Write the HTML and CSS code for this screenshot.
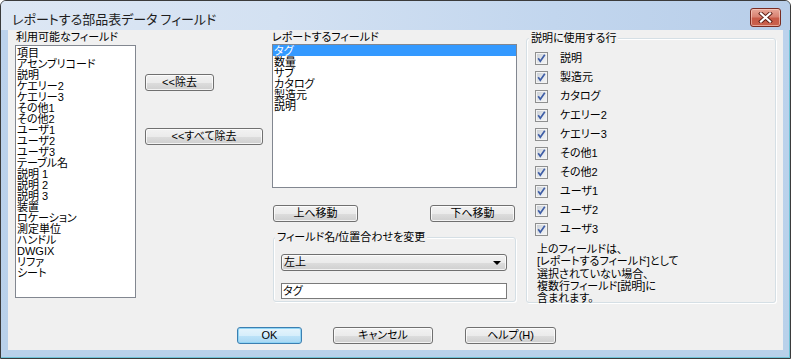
FILE: index.html
```html
<!DOCTYPE html>
<html lang="ja">
<head>
<meta charset="utf-8">
<title>レポートする部品表データ フィールド</title>
<link rel="stylesheet" href="styles.css">
</head>
<body>
<div class="window">
  <div class="titlebar">
    <div class="title">レポートする部品表データ フィールド</div>
    <div class="close">
      <svg width="15" height="11" viewBox="0 0 15 11">
        <path d="M3 1.5 L12 9.5 M12 1.5 L3 9.5" stroke="#5a1d14" stroke-width="4" stroke-linecap="square"/>
        <path d="M3 1.5 L12 9.5 M12 1.5 L3 9.5" stroke="#ffffff" stroke-width="2.2" stroke-linecap="square"/>
      </svg>
    </div>
  </div>
  <div class="client">
    <div class="top">
      <div class="col col-avail">
        <div class="label label-avail">利用可能なフィールド</div>
        <ul class="listbox list-avail">
          <li>項目</li>
          <li>アセンブリコード</li>
          <li>説明</li>
          <li>ケエリー2</li>
          <li>ケエリー3</li>
          <li>その他1</li>
          <li>その他2</li>
          <li>ユーザ1</li>
          <li>ユーザ2</li>
          <li>ユーザ3</li>
          <li>テーブル名</li>
          <li>説明 1</li>
          <li>説明 2</li>
          <li>説明 3</li>
          <li>装置</li>
          <li>ロケーション</li>
          <li>測定単位</li>
          <li>ハンドル</li>
          <li>DWGIX</li>
          <li>リファ</li>
          <li>シート</li>
        </ul>
      </div>
      <div class="col col-btns">
        <button class="btn btn-remove">&lt;&lt;除去</button>
        <button class="btn btn-remove-all">&lt;&lt;すべて除去</button>
      </div>
      <div class="col col-report">
        <div class="label label-report">レポートするフィールド</div>
        <ul class="listbox list-report">
          <li class="selected">タグ</li>
          <li>数量</li>
          <li>サブ</li>
          <li>カタログ</li>
          <li>製造元</li>
          <li>説明</li>
        </ul>
        <div class="move-row">
          <button class="btn btn-move">上へ移動</button>
          <button class="btn btn-move">下へ移動</button>
        </div>
        <div class="group change-group">
          <div class="legend">フィールド名/位置合わせを変更</div>
          <div class="combo"><span class="combo-text">左上</span><span class="arrow"></span></div>
          <div class="textbox">タグ</div>
        </div>
      </div>
      <div class="group desc-group">
        <div class="legend">説明に使用する行</div>
        <ul class="checks">
          <li><span class="cb"><svg width="11" height="11" viewBox="0 0 11 11"><path d="M2.2 5.2 L4.3 8.2 L8.8 1.8" fill="none" stroke="#3f5ea6" stroke-width="1.7"/></svg></span>説明</li>
          <li><span class="cb"><svg width="11" height="11" viewBox="0 0 11 11"><path d="M2.2 5.2 L4.3 8.2 L8.8 1.8" fill="none" stroke="#3f5ea6" stroke-width="1.7"/></svg></span>製造元</li>
          <li><span class="cb"><svg width="11" height="11" viewBox="0 0 11 11"><path d="M2.2 5.2 L4.3 8.2 L8.8 1.8" fill="none" stroke="#3f5ea6" stroke-width="1.7"/></svg></span>カタログ</li>
          <li><span class="cb"><svg width="11" height="11" viewBox="0 0 11 11"><path d="M2.2 5.2 L4.3 8.2 L8.8 1.8" fill="none" stroke="#3f5ea6" stroke-width="1.7"/></svg></span>ケエリー2</li>
          <li><span class="cb"><svg width="11" height="11" viewBox="0 0 11 11"><path d="M2.2 5.2 L4.3 8.2 L8.8 1.8" fill="none" stroke="#3f5ea6" stroke-width="1.7"/></svg></span>ケエリー3</li>
          <li><span class="cb"><svg width="11" height="11" viewBox="0 0 11 11"><path d="M2.2 5.2 L4.3 8.2 L8.8 1.8" fill="none" stroke="#3f5ea6" stroke-width="1.7"/></svg></span>その他1</li>
          <li><span class="cb"><svg width="11" height="11" viewBox="0 0 11 11"><path d="M2.2 5.2 L4.3 8.2 L8.8 1.8" fill="none" stroke="#3f5ea6" stroke-width="1.7"/></svg></span>その他2</li>
          <li><span class="cb"><svg width="11" height="11" viewBox="0 0 11 11"><path d="M2.2 5.2 L4.3 8.2 L8.8 1.8" fill="none" stroke="#3f5ea6" stroke-width="1.7"/></svg></span>ユーザ1</li>
          <li><span class="cb"><svg width="11" height="11" viewBox="0 0 11 11"><path d="M2.2 5.2 L4.3 8.2 L8.8 1.8" fill="none" stroke="#3f5ea6" stroke-width="1.7"/></svg></span>ユーザ2</li>
          <li><span class="cb"><svg width="11" height="11" viewBox="0 0 11 11"><path d="M2.2 5.2 L4.3 8.2 L8.8 1.8" fill="none" stroke="#3f5ea6" stroke-width="1.7"/></svg></span>ユーザ3</li>
        </ul>
        <p class="note">上のフィールドは、<br>[レポートするフィールド]として<br>選択されていない場合、<br>複数行フィールド[説明]に<br>含まれます。</p>
      </div>
    </div>
    <div class="bottom">
      <button class="btn btn-ok">OK</button>
      <button class="btn btn-cancel">キャンセル</button>
      <button class="btn btn-help">ヘルプ(H)</button>
    </div>
  </div>
</div>
</body>
</html>
```

FILE: styles.css
```css
* { box-sizing: border-box; }

html, body {
  margin: 0;
  padding: 0;
  background: #ffffff;
}

body {
  font-family: "Liberation Sans", "Noto Sans CJK JP", sans-serif;
  font-size: 11px;
  font-feature-settings: "palt";
  color: #000;
}

.window {
  width: 791px;
  height: 359px;
  border: 1px solid #3b3b3b;
  border-radius: 6px 6px 0 0;
  background: linear-gradient(to bottom, #c8daef 0px, #bcd2ec 30px, #b9d1ea 100%);
  box-shadow: inset -1px -1px 0 #6fc3d6;
  display: flex;
  flex-direction: column;
  overflow: hidden;
}

.titlebar {
  height: 29px;
  display: flex;
  justify-content: space-between;
  align-items: flex-start;
  background: linear-gradient(to right, #dde7f4 0%, #d3e1f2 35%, #c2d6ee 70%, #b8cee9 100%);
}

.title {
  padding: 10px 0 0 11px;
  font-family: "Noto Sans CJK JP", sans-serif;
  font-size: 13px;
  line-height: 16px;
  color: #1e1e1e;
}

.close {
  width: 31px;
  height: 19px;
  margin: 7px 9px 0 0;
  border: 1px solid #7a2c22;
  border-radius: 3px;
  background: linear-gradient(to bottom, #e8a899 0%, #d98373 45%, #c85a47 55%, #c9614c 100%);
  box-shadow: inset 0 0 0 1px rgba(255, 220, 210, 0.55);
  display: flex;
  align-items: center;
  justify-content: center;
}

.client {
  margin: 0 7px;
  height: 320px;
  background: #f0f0f0;
}

.top {
  height: 272px;
  display: flex;
  gap: 9px;
  padding-left: 7px;
}

.col {
  display: flex;
  flex-direction: column;
}

.label {
  line-height: 13px;
  padding-top: 1px;
  height: 14px;
}

.label-avail {
  height: 15px;
  padding-left: 1px;
}

.listbox {
  list-style: none;
  margin: 0;
  padding: 0;
  background: #fff;
  border: 1px solid #828790;
  line-height: 11px;
}

.listbox li {
  height: 11px;
  padding: 1px 0 0 1px;
  white-space: nowrap;
}

.listbox li.selected {
  background: #3399ff;
  color: #fff;
}

.col-avail {
  width: 121px;
}

.list-avail {
  height: 253px;
  padding-top: 1px;
}

.col-btns {
  width: 118px;
  padding-top: 44px;
  align-items: flex-start;
}

.btn {
  font-family: inherit;
  font-size: 11px;
  font-feature-settings: "palt";
  line-height: 15px;
  height: 17px;
  padding: 0;
  color: #000;
  border: 1px solid #707070;
  border-radius: 3px;
  background: linear-gradient(to bottom, #f2f2f2 0%, #ebebeb 50%, #dddddd 51%, #cfcfcf 100%);
  box-shadow: inset 0 0 0 1px rgba(255, 255, 255, 0.75);
  text-align: center;
}

.btn-remove {
  width: 69px;
}

.btn-remove-all {
  width: 118px;
  margin-top: 37px;
}

.col-report {
  width: 245px;
}

.list-report {
  height: 144px;
}

.move-row {
  display: flex;
  justify-content: space-between;
  margin-top: 17px;
  padding: 0 2px 0 1px;
}

.btn-move {
  width: 85px;
}

.group {
  border: 1px solid #d5dfe5;
  border-radius: 3px;
  box-shadow: inset 1px 1px 0 #ffffff, 1px 1px 0 #ffffff;
}

.legend {
  width: max-content;
  margin-top: -7px;
  background: #f0f0f0;
  line-height: 13px;
  padding: 0 2px;
}

.change-group {
  margin: 15px 0 0 1px;
  width: 243px;
  height: 65px;
}

.change-group .legend {
  margin-left: 1px;
}

.combo {
  margin: 10px 0 0 7px;
  width: 226px;
  height: 17px;
  border: 1px solid #707070;
  border-radius: 3px;
  background: linear-gradient(to bottom, #f2f2f2 0%, #ebebeb 50%, #dddddd 51%, #cfcfcf 100%);
  box-shadow: inset 0 0 0 1px rgba(255, 255, 255, 0.75);
  display: flex;
  align-items: center;
  justify-content: space-between;
  padding: 0 5px 0 2px;
  line-height: 15px;
}

.arrow {
  width: 0;
  height: 0;
  border-left: 4px solid transparent;
  border-right: 4px solid transparent;
  border-top: 4px solid #000;
  margin-top: 1px;
}

.textbox {
  margin: 12px 0 0 7px;
  width: 226px;
  height: 16px;
  background: #fff;
  border: 1px solid #7a7a7a;
  line-height: 14px;
  padding-left: 1px;
}

.desc-group {
  margin-top: 8px;
  width: 250px;
  height: 265px;
}

.desc-group .legend {
  margin-left: 2px;
}

.checks {
  list-style: none;
  margin: 7px 0 0 0;
  padding: 0 0 0 8px;
}

.checks li {
  height: 19px;
  display: flex;
  align-items: flex-start;
  line-height: 13px;
  gap: 12px;
}

.cb {
  width: 13px;
  height: 13px;
  border: 1px solid #8e8f8f;
  background: linear-gradient(135deg, #c6cbd2 0%, #e4e7ea 55%, #f6f7f8 100%);
  box-shadow: inset 0 0 0 1px #f3f3f3;
  display: flex;
  align-items: center;
  justify-content: center;
  flex: none;
}

.cb svg {
  display: block;
}

.note {
  margin: 0;
  padding: 1px 0 0 10px;
  line-height: 12.3px;
  white-space: nowrap;
}

.bottom {
  display: flex;
  padding: 25px 0 0 229px;
}

.btn-ok {
  width: 65px;
  border-color: #3c7fb1;
  background: linear-gradient(to bottom, #e5f4fc 0%, #d6eefb 50%, #bde3f8 51%, #a9d8f3 100%);
  box-shadow: inset 0 0 0 1px #8fd4f5;
}

.btn-cancel {
  width: 100px;
  margin-left: 31px;
}

.btn-help {
  width: 91px;
  margin-left: 32px;
}
```
